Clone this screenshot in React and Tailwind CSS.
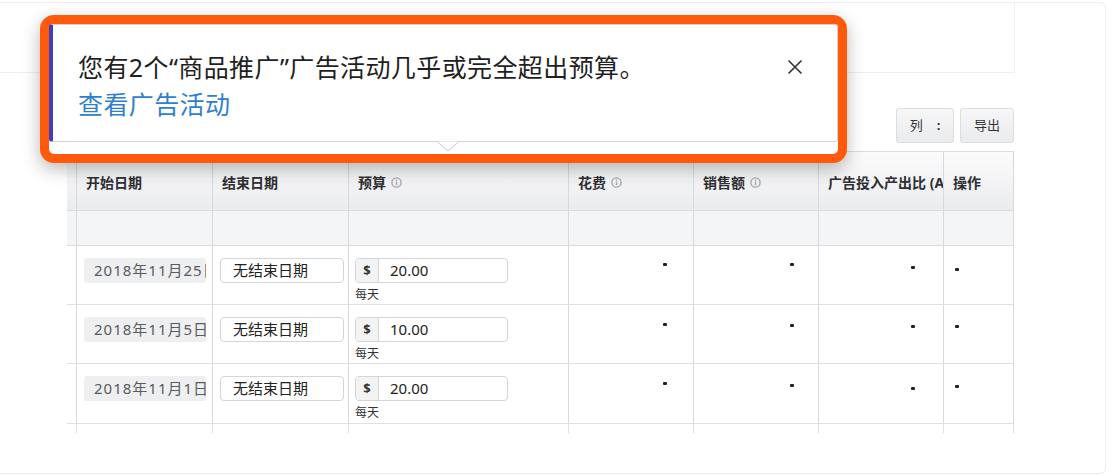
import React from "react";

const FONT = { fontFamily: '"Noto Sans", "Noto Sans CJK SC", sans-serif' };

const cols = "grid grid-cols-[9px_136px_136px_220px_125px_125px_125px_71px]";

function Info() {
  return (
    <svg width="11" height="11" viewBox="0 0 11 11" className="ml-[5px] inline-block shrink-0">
      <circle cx="5.5" cy="5.5" r="4.6" fill="none" stroke="#a9abae" strokeWidth="1.4" />
      <rect x="4.8" y="4.6" width="1.4" height="3.6" fill="#a9abae" />
      <rect x="4.8" y="2.6" width="1.4" height="1.3" fill="#a9abae" />
    </svg>
  );
}

const headers = [
  { t: "开始日期" },
  { t: "结束日期" },
  { t: "预算", info: true },
  { t: "花费", info: true },
  { t: "销售额", info: true },
  { t: "广告投入产出比 (ACoS)" },
  { t: "操作" },
];

const rows = [
  { start: "2018年11月25日", budget: "20.00", dots: [17, 17, 20, 22] },
  { start: "2018年11月5日", budget: "10.00", dots: [18, 19, 20, 20] },
  { start: "2018年11月1日", budget: "20.00", dots: [18, 20, 23, 21] },
];

function Dash({ top, align, pad }) {
  return (
    <div className={`flex ${align}`} style={{ paddingTop: top }}>
      <span className={`block w-[4px] h-[3px] rounded-[1px] bg-[#222] ${pad}`} />
    </div>
  );
}

export default function App() {
  return (
    <div className="relative w-[1112px] h-[476px] bg-white overflow-hidden text-[#333]" style={FONT}>
      {/* page frame */}
      <div className="mt-[2px] w-[1106px] h-[472px] border border-l-0 border-[#eceef1] rounded-r-md">
        <div className="h-[70px] w-[1015px] border-r border-b border-[#eceef0]" />

        {/* toolbar */}
        <div className="mt-[35px] w-[1014px] flex justify-end gap-[6px]">
          <button className="h-[35px] w-[58px] flex items-center justify-center gap-[14px] rounded-[3px] border border-[#dcdee1] bg-gradient-to-b from-[#f7f7f8] to-[#eaebed] text-[13px] text-[#333]">
            <span>列</span>
            <span className="font-bold">:</span>
          </button>
          <button className="h-[35px] w-[54px] flex items-center justify-center rounded-[3px] border border-[#dcdee1] bg-gradient-to-b from-[#f7f7f8] to-[#eaebed] text-[13px] text-[#333]">
            导出
          </button>
        </div>

        {/* table */}
        <div className="mt-[8px] ml-[67px] w-[947px]">
          <div className={`${cols} h-[60px] border-t border-b border-[#d9dce0] bg-gradient-to-b from-[#fbfbfc] to-[#ebecee]`}>
            <div />
            {headers.map((h, i) => (
              <div
                key={h.t}
                className={`flex items-center pl-[9px] pt-[2px] border-l border-[#d6d9dd] overflow-hidden whitespace-nowrap text-[14px] font-bold text-[#2f2f33] ${i === 6 ? "border-r" : ""}`}
              >
                <span className="overflow-hidden">{h.t}</span>
                {h.info && <Info />}
              </div>
            ))}
          </div>

          <div className={`${cols} h-[35px] border-b border-[#d9dce0] bg-[#f4f5f6]`}>
            <div />
            {headers.map((h, i) => (
              <div key={h.t} className={`border-l border-[#d6d9dd] ${i === 6 ? "border-r" : ""}`} />
            ))}
          </div>

          {rows.map((r, ri) => (
            <div key={ri} className={`${cols} ${ri === 2 ? "h-[60px]" : "h-[59px]"} border-b border-[#dcdfe3] bg-white`}>
              <div />
              <div className="border-l border-[#d6d9dd] pl-[7px] pt-[12px]">
                <div className="h-[25px] w-[122px] rounded-[3px] bg-[#eeeff1] pl-[10px] overflow-hidden whitespace-nowrap text-[15px] tracking-[1px] leading-[25px] text-[#5a5a60]">
                  {r.start}
                </div>
              </div>
              <div className="border-l border-[#d6d9dd] pl-[7px] pt-[12px]">
                <div className="h-[25px] w-[124px] rounded-[4px] border border-[#d3d5d9] bg-white pl-[12px] text-[15px] leading-[23px] text-[#222]">
                  无结束日期
                </div>
              </div>
              <div className="border-l border-[#d6d9dd] pl-[6px] pt-[12px]">
                <div className="flex h-[25px] w-[153px] rounded-[4px] border border-[#d3d5d9] bg-white overflow-hidden">
                  <div className="w-[23px] flex items-center justify-center bg-[#f3f3f4] border-r border-[#d3d5d9] text-[13px] font-bold text-[#333]">
                    $
                  </div>
                  <div className="pl-[11px] text-[15px] leading-[23px] text-[#222]">{r.budget}</div>
                </div>
                <div className="mt-[5px] text-[12px] leading-[14px] text-[#333]">每天</div>
              </div>
              <div className="border-l border-[#d6d9dd]">
                <Dash top={r.dots[0]} align="justify-end" pad="mr-[26px]" />
              </div>
              <div className="border-l border-[#d6d9dd]">
                <Dash top={r.dots[1]} align="justify-end" pad="mr-[24px]" />
              </div>
              <div className="border-l border-[#d6d9dd]">
                <Dash top={r.dots[2]} align="justify-end" pad="mr-[28px]" />
              </div>
              <div className="border-l border-r border-[#d6d9dd]">
                <Dash top={r.dots[3]} align="justify-start" pad="ml-[11px]" />
              </div>
            </div>
          ))}

          <div className={`${cols} h-[9px]`}>
            <div />
            {headers.map((h, i) => (
              <div key={h.t} className={`border-l border-[#dfe2e5] ${i === 6 ? "border-r" : ""}`} />
            ))}
          </div>
        </div>
      </div>

      {/* highlighted popover */}
      <div className="absolute left-[40px] top-[15px] w-[807px] h-[148px] rounded-[14px] border-[9px] border-[#ff5a0b] bg-white shadow-[0_6px_18px_rgba(0,0,0,0.28)]">
        <div className="relative h-[118px] border border-[#cfd3d8] border-l-[4px] border-l-[#3d3fbf] bg-white rounded-[3px] pl-[25px] pt-[24px]">
          <div className="text-[25px] tracking-[0.4px] leading-[37px] text-[#1f1f24] whitespace-nowrap">
            您有2个“商品推广”广告活动几乎或完全超出预算。
          </div>
          <div className="text-[25px] tracking-[0.4px] leading-[37px] text-[#2f7fd1]">查看广告活动</div>
          <button className="absolute right-[34px] top-[34px] w-[16px] h-[16px]">
            <svg width="16" height="16" viewBox="0 0 16 16">
              <path d="M1.5 1.5 L14.5 14.5 M14.5 1.5 L1.5 14.5" stroke="#333" strokeWidth="1.6" fill="none" />
            </svg>
          </button>
          <svg width="22" height="11" viewBox="0 0 22 11" className="absolute left-[384px] top-[116px]">
            <path d="M0 0.5 L11 10 L22 0.5 Z" fill="white" />
            <path d="M0 0.5 L11 10 L22 0.5" fill="none" stroke="#c7cbd0" strokeWidth="1" />
          </svg>
        </div>
      </div>
    </div>
  );
}
